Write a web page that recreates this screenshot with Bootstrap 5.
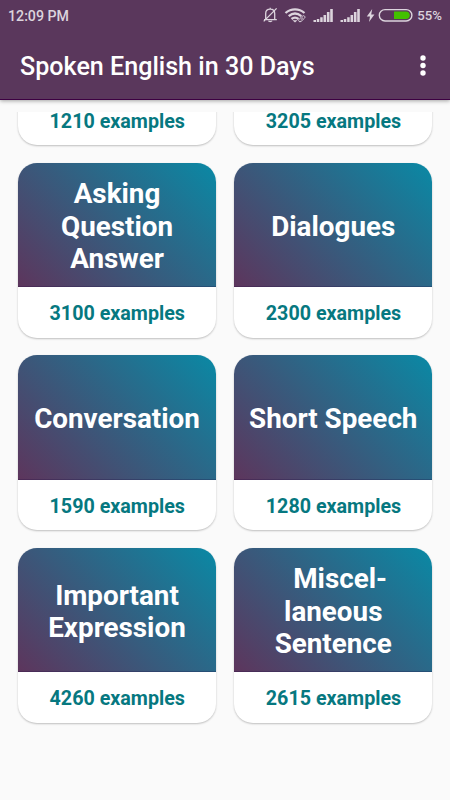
<!DOCTYPE html>
<html lang="en">
<head>
<meta charset="utf-8">
<meta name="viewport" content="width=device-width, initial-scale=1">
<title>Spoken English in 30 Days</title>
<link href="https://cdn.jsdelivr.net/npm/bootstrap@5.3.0/dist/css/bootstrap.min.css" rel="stylesheet">
<style>
body{font-family:Roboto,"Liberation Sans",sans-serif;background:#fafafa;height:800px}
.top-area{background:#5a375c;height:100px;border-bottom:1px solid #3d0042;box-shadow:0 1px 4px rgba(0,0,0,.35)}
.status{height:32px;padding:0 8px;color:#dcd4dd;font-size:14.2px;font-weight:500;line-height:32px}
.status svg{display:block;margin-right:-1px}
.charge{font-size:13.2px}
.app-title{height:67px;padding:1px 19.5px 0 20px;color:#fff}
.app-title h1{font-size:25.1px;font-weight:500;line-height:32px;padding-top:1px}
.more{margin-top:-1px}
.scroller{margin-top:12px;height:688px;padding:0 17.5px 0 17.5px}
.tiles{display:grid;grid-template-columns:198.5px 198.5px;column-gap:17.75px;row-gap:17.5px;margin-top:-142px}
.tile{height:175px;border:0;border-radius:19px;box-shadow:0 1px 2px rgba(0,0,0,.24)}
.tile-head{height:124.5px;background:linear-gradient(45deg,#5d355c 0%,#0a89a5 100%);box-shadow:inset 0 -1px 0 rgba(20,0,60,.22);color:#fff;font-weight:700;font-size:27.8px;line-height:32.5px;white-space:pre;padding:4.5px 0 0 .5px}
.tile-foot{height:50px;color:#067880;font-weight:700;font-size:19.7px;line-height:24px;padding:4px 0 0 1px}
</style>
</head>
<body class="overflow-hidden">
<header class="top-area position-relative">
  <div class="status d-flex justify-content-between align-items-center">
    <span class="clock">12:09 PM</span>
    <div class="d-flex align-items-center">
      <svg width="168" height="32" viewBox="0 0 168 32" fill="none" stroke="#dcd4dd">
        <g stroke-width="1.3">
          <path d="M15.7 19.3V13.5c0-2.7 1.9-4.4 4.5-4.4s4.5 1.7 4.5 4.4v5.8M14 19.6h12.8M13.7 21.4 26.6 8.4M20.2 7.8v1.4"/>
          <path d="M18.4 20.8c.6 1.1 3 1.1 3.6 0"/>
        </g>
        <g stroke-width="2.3">
          <path d="M35.5 13c5.6-4.8 13.4-4.8 19 0M38.7 16.2c3.9-3.3 8.7-3.3 12.6 0M41.5 19c2.2-1.8 4.8-1.8 7 0"/>
        </g>
        <path d="M42.5 20.2h5l-2.5 2.2z" fill="#dcd4dd" stroke="none"/>
        <path d="m49.1 19.4 3.3-3.3c1.4-1.2 3.5.6 2.1 2.1l-3.4 3.2c-1.5 1.2-3.3-.5-2-2z" fill="#5a375c" stroke-width="1"/>
        <path d="m50.7 19.8 2.3-2.2" stroke-width="1"/>
        <g fill="#dcd4dd" stroke="none">
          <path id="bars" d="M63.5 20.1h2.5v2h-2.5zM66.8 18.9h2.5v3.2h-2.5zM70.2 17.3h2.5v4.8h-2.5zM73.5 14.9h2.6v7.2h-2.6zM76.9 12h2.6v10.1h-2.6zM80.2 9h2.6v13.1h-2.6z"/>
          <use href="#bars" x="27"/>
          <path d="M122.2 9l-5.4 7.6h3.2l-1 5.4 5.4-7.6h-3.2z"/>
        </g>
        <rect x="129.3" y="9.6" width="32.6" height="11.4" rx="5.7" stroke-width="1.4"/>
        <path d="M144 11.5h11.9a3.8 3.8 0 0 1 0 7.6H144z" fill="#43c000" stroke="none"/>
      </svg>
      <span class="charge">55%</span>
    </div>
  </div>
  <div class="app-title d-flex justify-content-between align-items-center">
    <h1 class="m-0 text-nowrap">Spoken English in 30 Days</h1>
    <svg class="more" width="16" height="24" viewBox="0 0 16 24" fill="#fff"><circle cx="8" cy="4" r="2.7"/><circle cx="8" cy="11.5" r="2.7"/><circle cx="8" cy="19" r="2.7"/></svg>
  </div>
</header>
<main class="scroller overflow-hidden">
  <div class="tiles">
    <div class="tile card"><div class="tile-head"></div><div class="tile-foot d-flex align-items-center justify-content-center">1210 examples</div></div>
    <div class="tile card"><div class="tile-head"></div><div class="tile-foot d-flex align-items-center justify-content-center">3205 examples</div></div>
    <div class="tile card overflow-hidden"><div class="tile-head d-flex align-items-center justify-content-center text-center">Asking
Question
Answer</div><div class="tile-foot d-flex align-items-center justify-content-center">3100 examples</div></div>
    <div class="tile card overflow-hidden"><div class="tile-head d-flex align-items-center justify-content-center text-center">Dialogues</div><div class="tile-foot d-flex align-items-center justify-content-center">2300 examples</div></div>
    <div class="tile card overflow-hidden"><div class="tile-head d-flex align-items-center justify-content-center text-center">Conversation</div><div class="tile-foot d-flex align-items-center justify-content-center">1590 examples</div></div>
    <div class="tile card overflow-hidden"><div class="tile-head d-flex align-items-center justify-content-center text-center">Short Speech</div><div class="tile-foot d-flex align-items-center justify-content-center">1280 examples</div></div>
    <div class="tile card overflow-hidden"><div class="tile-head d-flex align-items-center justify-content-center text-center">Important
Expression</div><div class="tile-foot d-flex align-items-center justify-content-center">4260 examples</div></div>
    <div class="tile card overflow-hidden"><div class="tile-head d-flex align-items-center justify-content-center text-center">  Miscel-
laneous
Sentence</div><div class="tile-foot d-flex align-items-center justify-content-center">2615 examples</div></div>
  </div>
</main>
<script src="https://cdn.jsdelivr.net/npm/bootstrap@5.3.0/dist/js/bootstrap.bundle.min.js"></script>
</body>
</html>
